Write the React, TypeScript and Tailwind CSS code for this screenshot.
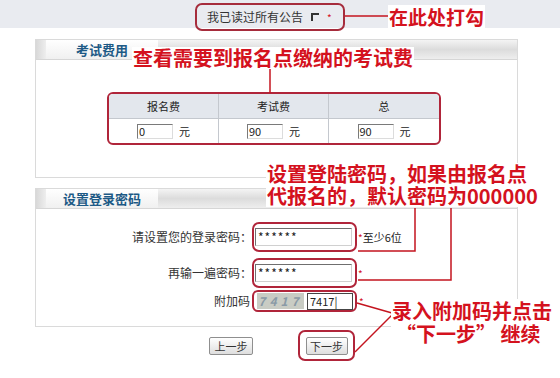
const red = 'text-[#d4121e]';

function Callout({ className, children }: { className: string; children: React.ReactNode }) {
  return (
    <div className={`absolute bg-white font-bold ${red} ${className}`}>
      {children}
    </div>
  );
}

function PanelHeader({ title, tabWidth }: { title: string; tabWidth: string }) {
  return (
    <div className="flex h-[20px] bg-gradient-to-b from-[#f4f4f4] via-[#dcdcdc] to-[#eeeeee] border-b border-[#d6d6d6]">
      <div className="w-[10px] bg-gradient-to-r from-[#d8d8d8] to-[#eeeeee]" />
      <div
        className={`${tabWidth} bg-gradient-to-b from-white to-[#f0f0f0] text-[13px] font-bold text-[#1d5a86] leading-[20px] text-center`}
      >
        {title}
      </div>
    </div>
  );
}

function FeeCell({ value }: { value: string }) {
  return (
    <div className="flex items-center justify-center gap-[6px] h-[24px]">
      <div className="w-[36px] h-[15px] border border-[#7a7a7a] border-r-[#dcdcdc] border-b-[#dcdcdc] bg-white text-[11px] leading-[13px] pl-[1px] text-[#222]">
        {value}
      </div>
      <span className="text-[11px] text-[#222]">元</span>
    </div>
  );
}

function Field({ value }: { value: string }) {
  return (
    <div className="w-[97px] h-[18px] border border-[#6f6f6f] border-r-[#d0d0d0] border-b-[#d0d0d0] bg-white text-[12px] leading-[16px] pl-[2px] text-[#222] tracking-[1px]">
      {value}
    </div>
  );
}

export default function App() {
  return (
    <div
      className="relative w-[560px] h-[378px] overflow-hidden bg-white text-[#333]"
      style={{ fontFamily: '"Noto Sans CJK SC", "Liberation Sans", sans-serif' }}
    >
      {/* top notice bar */}
      <div className="h-[28px] bg-[#e9ebf0] pt-[3px] pl-[195px]">
        <div className="w-[150px] h-[28px] border-2 border-[#a62c3c] rounded-[7px] flex items-center pl-[10px] text-[12px] text-[#333]">
          <span>我已读过所有公告</span>
          <span className="ml-[8px] w-[8px] h-[8px] border-l-2 border-t-2 border-[#333]" />
          <span className="ml-[8px] text-[#d4121e] text-[10px]">*</span>
        </div>
      </div>

      {/* fee panel */}
      <div className="ml-[35px] mt-[11px] w-[483px] h-[139px] border border-[#dadada]">
        <PanelHeader title="考试费用" tabWidth="w-[112px]" />
        <div className="ml-[71px] mt-[32px] w-[334px] border-2 border-[#b0253a] rounded-[6px] overflow-hidden">
          <div className="grid grid-cols-3 bg-[#e3e7ed] h-[25px] border-b border-[#c4c8ce] text-[11px] leading-[25px] text-center text-[#222]">
            <div className="border-r border-[#c4c8ce]">报名费</div>
            <div className="border-r border-[#c4c8ce]">考试费</div>
            <div>总</div>
          </div>
          <div className="grid grid-cols-3">
            <div className="border-r border-[#c4c8ce]">
              <FeeCell value="0" />
            </div>
            <div className="border-r border-[#c4c8ce]">
              <FeeCell value="90" />
            </div>
            <FeeCell value="90" />
          </div>
        </div>
      </div>

      {/* password panel */}
      <div className="ml-[35px] mt-[10px] w-[483px] h-[139px] border border-[#dadada]">
        <PanelHeader title="设置登录密码" tabWidth="w-[112px]" />
        <div className="mt-[13px] flex items-center h-[30px]">
          <div className="w-[216px] text-right text-[12px]">请设置您的登录密码：</div>
          <div className="h-[30px] w-[105px] border-2 border-[#b0253a] rounded-[7px] flex items-center pl-[1px]">
            <Field value="******" />
          </div>
          <span className="text-[10px] text-[#d4121e] ml-[1px]">*</span>
          <span className="text-[11px] text-[#222]">至少6位</span>
        </div>
        <div className="mt-[6px] flex items-center h-[30px]">
          <div className="w-[216px] text-right text-[12px]">再输一遍密码：</div>
          <div className="h-[30px] w-[105px] border-2 border-[#b0253a] rounded-[7px] flex items-center pl-[1px]">
            <Field value="******" />
          </div>
          <span className="text-[10px] text-[#d4121e] ml-[1px]">*</span>
        </div>
        <div className="mt-[2px] flex items-center h-[22px]">
          <div className="w-[216px] text-right text-[12px] pr-[2px]">附加码</div>
          <div className="h-[22px] w-[105px] border-2 border-[#b0253a] rounded-[6px] flex items-center pl-[3px] gap-[3px]">
            <div className="w-[47px] h-[16px] bg-[#c9ccc4] text-[12px] leading-[16px] tracking-[4px] text-center text-[#8a9aa6] font-bold italic">
              7417
            </div>
            <div className="w-[46px] h-[17px] border border-[#444] bg-white text-[11px] leading-[15px] pl-[2px] text-[#222]">
              7417|
            </div>
          </div>
          <span className="text-[10px] text-[#d4121e] ml-[2px]">*</span>
        </div>
      </div>

      {/* buttons */}
      <div className="flex items-center mt-[3px] h-[31px]">
        <button className="ml-[209px] w-[44px] h-[18px] border border-[#8f8f8f] rounded-[2px] bg-gradient-to-b from-white to-[#dedede] text-[11px] leading-[16px]">
          上一步
        </button>
        <div className="ml-[45px] w-[57px] h-[31px] border-2 border-[#b0253a] rounded-[7px] flex items-center justify-center">
          <button className="w-[42px] h-[18px] border border-[#8f8f8f] rounded-[2px] bg-gradient-to-b from-white to-[#dedede] text-[11px] leading-[16px]">
            下一步
          </button>
        </div>
      </div>

      {/* connector lines */}
      <svg className="absolute inset-0 pointer-events-none" width="560" height="378">
        <g stroke="#c4141f" strokeWidth="1.5" fill="none">
          <line x1="345" y1="16" x2="388" y2="16" />
          <line x1="270" y1="69" x2="270" y2="93" />
          <polyline points="415,208 415,251 358,251" />
          <polyline points="451,208 451,280 358,280" />
          <line x1="357" y1="303" x2="392" y2="313" />
          <line x1="355" y1="352" x2="392" y2="315" />
        </g>
      </svg>

      {/* annotations */}
      <Callout className="left-[388px] top-[5px] px-[1px] text-[19px] leading-[23px] bg-[#f6f7f9]">在此处打勾</Callout>
      <Callout className="left-[132px] top-[47px] px-[1px] text-[20px] leading-[22px]">查看需要到报名点缴纳的考试费</Callout>
      <Callout className="left-[266px] top-[163px] px-[1px] text-[20px] leading-[22px]">
        <div>设置登陆密码，如果由报名点</div>
        <div>代报名的，默认密码为000000</div>
      </Callout>
      <Callout className="left-[391px] top-[299px] px-[1px] text-[20px] leading-[23px]">
        <div>录入附加码并点击</div>
        <div className="pl-[4px]">“下一步” 继续</div>
      </Callout>
    </div>
  );
}
